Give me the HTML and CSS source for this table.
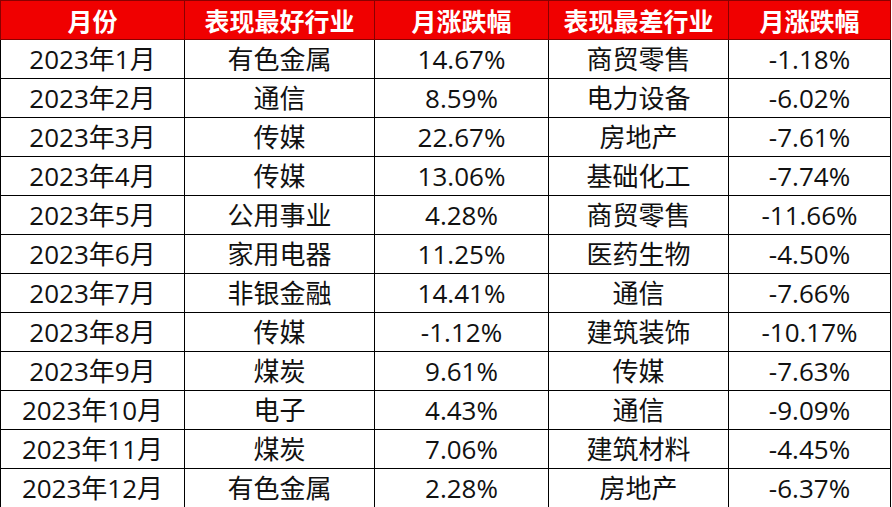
FILE: index.html
```html
<!DOCTYPE html>
<html lang="zh">
<head>
<meta charset="utf-8">
<link rel="stylesheet" href="styles.css">
</head>
<body>
<table class="perf">
<colgroup>
<col class="c1"><col class="c2"><col class="c3"><col class="c4"><col class="c5">
</colgroup>
<thead>
<tr><th>月份</th><th>表现最好行业</th><th>月涨跌幅</th><th>表现最差行业</th><th>月涨跌幅</th></tr>
</thead>
<tbody>
<tr><td>2023年1月</td><td>有色金属</td><td>14.67%</td><td>商贸零售</td><td>-1.18%</td></tr>
<tr><td>2023年2月</td><td>通信</td><td>8.59%</td><td>电力设备</td><td>-6.02%</td></tr>
<tr><td>2023年3月</td><td>传媒</td><td>22.67%</td><td>房地产</td><td>-7.61%</td></tr>
<tr><td>2023年4月</td><td>传媒</td><td>13.06%</td><td>基础化工</td><td>-7.74%</td></tr>
<tr><td>2023年5月</td><td>公用事业</td><td>4.28%</td><td>商贸零售</td><td>-11.66%</td></tr>
<tr><td>2023年6月</td><td>家用电器</td><td>11.25%</td><td>医药生物</td><td>-4.50%</td></tr>
<tr><td>2023年7月</td><td>非银金融</td><td>14.41%</td><td>通信</td><td>-7.66%</td></tr>
<tr><td>2023年8月</td><td>传媒</td><td>-1.12%</td><td>建筑装饰</td><td>-10.17%</td></tr>
<tr><td>2023年9月</td><td>煤炭</td><td>9.61%</td><td>传媒</td><td>-7.63%</td></tr>
<tr><td>2023年10月</td><td>电子</td><td>4.43%</td><td>通信</td><td>-9.09%</td></tr>
<tr><td>2023年11月</td><td>煤炭</td><td>7.06%</td><td>建筑材料</td><td>-4.45%</td></tr>
<tr><td>2023年12月</td><td>有色金属</td><td>2.28%</td><td>房地产</td><td>-6.37%</td></tr>
</tbody>
</table>
</body>
</html>
```
FILE: styles.css
```css
html, body {
  margin: 0;
  padding: 0;
  background: #ffffff;
}
.perf {
  border-collapse: collapse;
  table-layout: fixed;
  width: 890px;
  font-family: "Open Sans", "Noto Sans CJK SC", sans-serif;
  color: #111;
}
.c1 { width: 184px; }
.c2 { width: 190px; }
.c3 { width: 174px; }
.c4 { width: 180px; }
.c5 { width: 162px; }
.perf th {
  background: #f00000;
  color: #ffffff;
  font-family: "Noto Sans CJK SC", sans-serif;
  font-weight: 700;
  font-size: 25px;
  height: 38px;
  padding: 0;
  border: 1px solid #8a0000;
  line-height: 1;
}
.perf td {
  height: 38px;
  padding: 0;
  border: 1px solid #000;
  text-align: center;
  font-size: 26px;
  line-height: 1;
  white-space: nowrap;
}
```
